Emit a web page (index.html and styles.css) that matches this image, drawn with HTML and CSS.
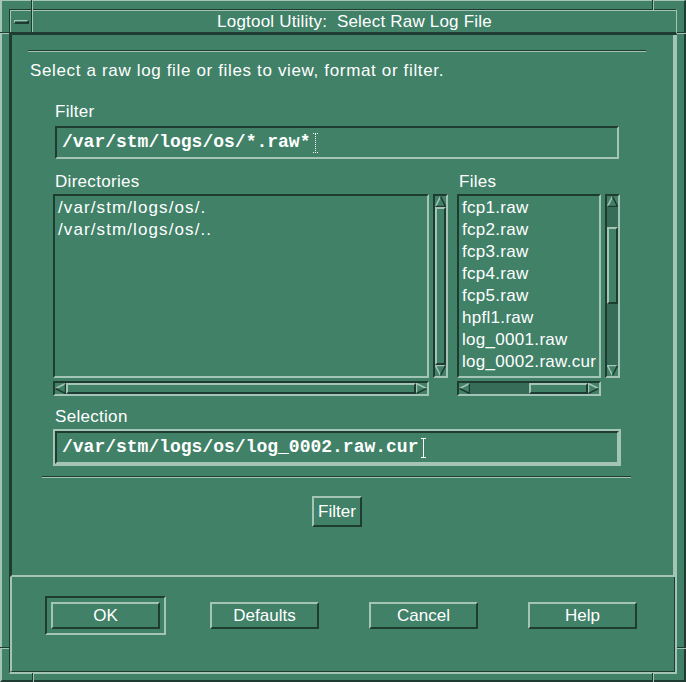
FILE: index.html
```html
<!DOCTYPE html>
<html>
<head>
<meta charset="utf-8">
<title>Logtool Utility: Select Raw Log File</title>
<link rel="stylesheet" href="styles.css">
</head>
<body>
<div class="frame">
  <span class="mark mark-v mark-tl"></span>
  <span class="mark mark-v mark-tr"></span>
  <span class="mark mark-v mark-bl"></span>
  <span class="mark mark-v mark-br"></span>
  <span class="mark mark-h mark-lt"></span>
  <span class="mark mark-h mark-rt"></span>
  <span class="mark mark-h mark-lb"></span>
  <span class="mark mark-h mark-rb"></span>

  <div class="titlebar">
    <div class="menubtn"><span class="menubar"></span></div>
    <div class="title">Logtool Utility:  Select Raw Log File</div>
  </div>

  <div class="client">
    <div class="work">
      <div class="sep sep-top"></div>
      <p class="instr">Select a raw log file or files to view, format or filter.</p>

      <div class="form">
        <div class="lbl lbl-filter">Filter</div>
        <div class="field">
          <div class="field-in">
            <span class="mono">/var/stm/logs/os/*.raw*</span>
            <svg class="caret" width="5" height="20" viewBox="0 0 5 20"><path class="caret-dot" d="M0 0.5H5M0 19.5H5M2.5 1V19"/></svg>
          </div>
        </div>

        <div class="lists">
          <div class="group group-dir">
            <div class="lbl">Directories</div>
            <div class="list list-dir">
              <div class="item">/var/stm/logs/os/.</div>
              <div class="item">/var/stm/logs/os/..</div>
            </div>
            <div class="vsb">
              <svg class="arrow" width="11" height="11" viewBox="0 0 11 11"><polygon class="a-fill" points="5.5,0.5 0.5,10.5 10.5,10.5"/><polyline class="a-lt" points="0.5,10.5 5.5,0.5"/><polyline class="a-dk" points="5.5,0.5 10.5,10.5 0.5,10.5"/></svg>
              <div class="trough"><div class="slider" style="margin-top:0;height:100%"></div></div>
              <svg class="arrow" width="11" height="11" viewBox="0 0 11 11"><polygon class="a-fill" points="0.5,0.5 10.5,0.5 5.5,10.5"/><polyline class="a-lt" points="5.5,10.5 0.5,0.5 10.5,0.5"/><polyline class="a-dk" points="10.5,0.5 5.5,10.5"/></svg>
            </div>
            <div class="hsb">
              <svg class="arrow" width="11" height="11" viewBox="0 0 11 11"><polygon class="a-fill" points="0.5,5.5 10.5,0.5 10.5,10.5"/><polyline class="a-lt" points="0.5,5.5 10.5,0.5"/><polyline class="a-dk" points="10.5,0.5 10.5,10.5 0.5,5.5"/></svg>
              <div class="trough"><div class="slider" style="margin-left:0;width:100%"></div></div>
              <svg class="arrow" width="11" height="11" viewBox="0 0 11 11"><polygon class="a-fill" points="10.5,5.5 0.5,0.5 0.5,10.5"/><polyline class="a-lt" points="0.5,10.5 0.5,0.5 10.5,5.5"/><polyline class="a-dk" points="10.5,5.5 0.5,10.5"/></svg>
            </div>
          </div>

          <div class="group group-files">
            <div class="lbl">Files</div>
            <div class="list">
              <div class="item">fcp1.raw</div>
              <div class="item">fcp2.raw</div>
              <div class="item">fcp3.raw</div>
              <div class="item">fcp4.raw</div>
              <div class="item">fcp5.raw</div>
              <div class="item">hpfl1.raw</div>
              <div class="item">log_0001.raw</div>
              <div class="item">log_0002.raw.cur</div>
            </div>
            <div class="vsb">
              <svg class="arrow" width="11" height="11" viewBox="0 0 11 11"><polygon class="a-fill" points="5.5,0.5 0.5,10.5 10.5,10.5"/><polyline class="a-lt" points="0.5,10.5 5.5,0.5"/><polyline class="a-dk" points="5.5,0.5 10.5,10.5 0.5,10.5"/></svg>
              <div class="trough"><div class="slider" style="margin-top:20px;height:77px"></div></div>
              <svg class="arrow" width="11" height="11" viewBox="0 0 11 11"><polygon class="a-fill" points="0.5,0.5 10.5,0.5 5.5,10.5"/><polyline class="a-lt" points="5.5,10.5 0.5,0.5 10.5,0.5"/><polyline class="a-dk" points="10.5,0.5 5.5,10.5"/></svg>
            </div>
            <div class="hsb">
              <svg class="arrow" width="11" height="11" viewBox="0 0 11 11"><polygon class="a-fill" points="0.5,5.5 10.5,0.5 10.5,10.5"/><polyline class="a-lt" points="0.5,5.5 10.5,0.5"/><polyline class="a-dk" points="10.5,0.5 10.5,10.5 0.5,5.5"/></svg>
              <div class="trough"><div class="slider" style="margin-left:59px;width:59px"></div></div>
              <svg class="arrow" width="11" height="11" viewBox="0 0 11 11"><polygon class="a-fill" points="10.5,5.5 0.5,0.5 0.5,10.5"/><polyline class="a-lt" points="0.5,10.5 0.5,0.5 10.5,5.5"/><polyline class="a-dk" points="10.5,5.5 0.5,10.5"/></svg>
            </div>
          </div>
        </div>

        <div class="lbl lbl-sel">Selection</div>
        <div class="field focus">
          <div class="field-in">
            <span class="mono">/var/stm/logs/os/log_0002.raw.cur</span>
            <svg class="caret caret-on" width="5" height="20" viewBox="0 0 5 20"><path class="caret-solid" d="M0 0.5H5M0 19.5H5M2.5 1V19"/></svg>
          </div>
        </div>
      </div>

      <div class="sep sep-mid"></div>
      <button class="btn btn-filter">Filter</button>
    </div>

    <div class="actions">
      <div class="ring default"><button class="btn">OK</button></div>
      <div class="ring"><button class="btn">Defaults</button></div>
      <div class="ring"><button class="btn">Cancel</button></div>
      <div class="ring"><button class="btn">Help</button></div>
    </div>
  </div>
</div>
</body>
</html>
```

FILE: styles.css
```css
:root {
  --bg: #408168;
  --lt: #a4c4b8;
  --dk: #1e3c32;
  --tr: #366c58;
}

* { box-sizing: border-box; }

html, body {
  margin: 0;
  background: var(--bg);
}

body {
  width: 686px;
  height: 682px;
  overflow: hidden;
  font-family: "Liberation Sans", Arial, sans-serif;
  font-size: 17px;
  color: #ffffff;
}

.frame {
  position: relative;
  width: 686px;
  height: 682px;
  border-style: solid;
  border-width: 1px 2px 2px 2px;
  border-color: var(--lt) var(--dk) var(--dk) var(--lt);
  padding: 8px 7px 6px 7px;
  display: flex;
  flex-direction: column;
}

/* resize-handle notches of the window frame */
.mark { position: absolute; }
.mark-v {
  width: 2px;
  border-left: 1px solid var(--dk);
  border-right: 1px solid var(--lt);
}
.mark-h {
  height: 2px;
  border-top: 1px solid var(--dk);
  border-bottom: 1px solid var(--lt);
}
.mark-tl { left: 29px; top: -1px; height: 10px; }
.mark-tr { left: 650px; top: -1px; height: 10px; }
.mark-bl { left: 30px; top: 672px; height: 10px; }
.mark-br { left: 650px; top: 672px; height: 10px; }
.mark-lt { left: -2px; top: 31px; width: 9px; }
.mark-rt { left: 675px; top: 31px; width: 9px; }
.mark-lb { left: -2px; top: 646px; width: 9px; }
.mark-rb { left: 675px; top: 646px; width: 9px; }

/* title bar */
.titlebar {
  height: 26px;
  flex: none;
  display: flex;
  border-top: 1px solid var(--dk);
  border-left: 1px solid var(--dk);
  border-right: 1px solid var(--lt);
  border-bottom: 3px solid var(--dk);
  box-shadow: inset 1px 1px 0 var(--lt);
}
.menubtn {
  width: 22px;
  flex: none;
  display: flex;
  align-items: center;
  padding: 1px 0 0 4px;
  border-right: 1px solid var(--dk);
}
.menubar {
  display: block;
  width: 15px;
  height: 4px;
  border-style: solid;
  border-width: 1px 2px 2px 1px;
  border-color: var(--lt) var(--dk) var(--dk) var(--lt);
}
.title {
  flex: 1;
  border-left: 1px solid var(--lt);
  padding-top: 1px;
  line-height: 21px;
  text-align: center;
  white-space: pre;
  letter-spacing: 0.2px;
}

/* client area */
.client {
  flex: 1;
  display: flex;
  flex-direction: column;
  border-left: 1px solid var(--dk);
  border-right: 2px solid var(--lt);
  border-bottom: 2px solid var(--lt);
}
.work {
  height: 542px;
  flex: none;
  border-left: 2px solid var(--dk);
  border-right: 2px solid var(--lt);
  border-bottom: 2px solid var(--lt);
}
.actions {
  flex: 1;
  display: flex;
  gap: 38px;
  padding: 19px 0 0 33px;
  border-left: 2px solid var(--lt);
  border-right: 1px solid var(--dk);
  border-bottom: 1px solid var(--dk);
}

.sep {
  height: 2px;
  border-top: 1px solid var(--dk);
  border-bottom: 1px solid var(--lt);
}
.sep-top { margin: 15px 27px 0 16px; }
.sep-mid { margin: 10px 42px 0 30px; }

.instr {
  margin: 9px 0 0 18px;
  line-height: 20px;
  letter-spacing: 0.65px;
}

.form {
  margin-left: 41px;
  width: 568px;
}

.lbl {
  line-height: 20px;
  padding-left: 2px;
  letter-spacing: 0.3px;
}
.lbl-filter { margin-top: 21px; }
.lbl-sel { margin-top: 11px; }

.field {
  margin-top: 2px;
  height: 37px;
  border: 2px solid var(--bg);
}
.field.focus { border-color: var(--lt); }
.field-in {
  height: 100%;
  display: flex;
  align-items: center;
  padding-left: 5px;
  border-style: solid;
  border-width: 2px;
  border-color: var(--dk) var(--lt) var(--lt) var(--dk);
}
.mono {
  font-family: "Liberation Mono", "Courier New", monospace;
  font-weight: bold;
  font-size: 18px;
  line-height: 29px;
  white-space: pre;
}
.caret { display: block; margin-left: 3px; }
.caret path { fill: none; stroke-width: 1; }
.caret-dot { stroke: #ffffff; stroke-dasharray: 1 1; }
.caret-solid { stroke: #ffffff; }

/* lists */
.lists {
  margin-top: 11px;
  display: flex;
  gap: 9px;
}
.group {
  display: grid;
  column-gap: 4px;
  grid-template-rows: 20px auto auto;
}
.group-dir { grid-template-columns: 376px 15px; }
.group-files { grid-template-columns: 144px 15px; }
.group .lbl { grid-column: 1 / 3; }

.list {
  margin-top: 2px;
  height: 184px;
  padding: 1px 0 0 3px;
  overflow: hidden;
  white-space: nowrap;
  line-height: 22px;
  letter-spacing: 0.3px;
  border-style: solid;
  border-width: 2px;
  border-color: var(--dk) var(--lt) var(--lt) var(--dk);
}
.list-dir { letter-spacing: 1.1px; }

.vsb, .hsb {
  display: flex;
  background: var(--tr);
  border-style: solid;
  border-width: 2px;
  border-color: var(--dk) var(--lt) var(--lt) var(--dk);
}
.vsb {
  margin-top: 2px;
  height: 184px;
  width: 15px;
  flex-direction: column;
}
.hsb {
  margin-top: 3px;
  height: 15px;
}
.arrow {
  display: block;
  flex: none;
  background: var(--bg);
}
.a-fill { fill: var(--bg); }
.a-lt { fill: none; stroke: var(--lt); stroke-width: 1.5; }
.a-dk { fill: none; stroke: var(--dk); stroke-width: 1.5; }

.trough {
  flex: 1;
  display: flex;
  min-width: 0;
  min-height: 0;
}
.vsb .trough { flex-direction: column; }
.slider {
  flex: none;
  background: var(--bg);
  border-style: solid;
  border-width: 2px;
  border-color: var(--lt) var(--dk) var(--dk) var(--lt);
}
.vsb .slider { width: 100%; }
.hsb .slider { height: 100%; }

/* push buttons */
.btn {
  display: block;
  margin: 0;
  padding: 0;
  background: var(--bg);
  color: #ffffff;
  font: inherit;
  border-style: solid;
  border-width: 2px;
  border-color: var(--lt) var(--dk) var(--dk) var(--lt);
  border-radius: 0;
}
.btn-filter {
  margin: 18px 0 0 300px;
  width: 50px;
  height: 31px;
  line-height: 27px;
}
.ring {
  width: 121px;
  height: 39px;
  padding: 4px;
  border: 2px solid var(--bg);
}
.ring.default { border-color: var(--dk) var(--lt) var(--lt) var(--dk); }
.ring .btn {
  width: 109px;
  height: 27px;
  line-height: 23px;
}
```
